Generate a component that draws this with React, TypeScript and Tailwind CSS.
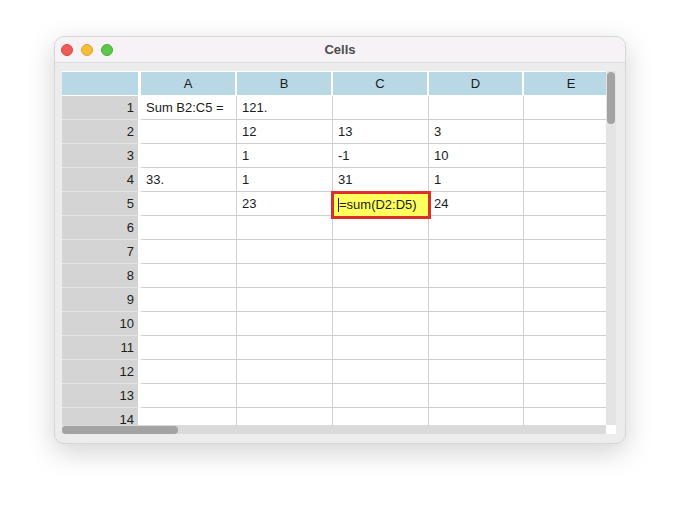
import * as React from 'react';

const columns = ['A', 'B', 'C', 'D', 'E'];
const colWidths = ['w-[96px]', 'w-[96px]', 'w-[96px]', 'w-[95px]', 'w-[96px]'];

// cell contents keyed by row, then column index
const data: Record<number, Record<number, string>> = {
    1: { 0: 'Sum B2:C5 =', 1: '121.' },
    2: { 1: '12', 2: '13', 3: '3' },
    3: { 1: '1', 2: '-1', 3: '10' },
    4: { 0: '33.', 1: '1', 2: '31', 3: '1' },
    5: { 1: '23', 3: '24' },
};

const rows = Array.from({ length: 14 }, (_, i) => i + 1);

const App: React.FunctionComponent = () => {
    return (
        <div className="w-[680px] h-[516px] bg-white flex items-start justify-start" style={{ fontFamily: '"Liberation Sans", Arial, sans-serif' }}>
            <div className="ml-[54px] mt-[36px] w-[572px] h-[408px] rounded-[10px] bg-[#ececec] border border-[#d6d6d6] shadow-[0_8px_28px_rgba(0,0,0,0.18)] overflow-hidden flex flex-col">
                {/* title bar */}
                <div className="h-[26px] shrink-0 bg-[#f6f2f6] border-b border-[#dcdcdc] flex items-center relative">
                    <div className="flex gap-[8px] pl-[6px]">
                        <span className="w-[12px] h-[12px] rounded-full bg-[#ee5d55] border border-[#d9483f]"></span>
                        <span className="w-[12px] h-[12px] rounded-full bg-[#f6bd3b] border border-[#dca32c]"></span>
                        <span className="w-[12px] h-[12px] rounded-full bg-[#5ec64a] border border-[#48ac37]"></span>
                    </div>
                    <div className="absolute inset-0 flex items-center justify-center text-[13px] font-bold text-[#4b4b4b]">Cells</div>
                </div>

                <div className="flex-1 pl-[7px] pt-[8px]">
                    <div className="flex">
                        {/* sheet */}
                        <div className="w-[544px] h-[354px] bg-white overflow-hidden">
                            <div className="flex h-[25px] pt-px border-b border-white w-max">
                                <div className="w-[79px] h-full bg-[#b8d8e5] border-r-[3px] border-white"></div>
                                {columns.map((c, ci) => (
                                    <div key={c} className={`${colWidths[ci]} h-full bg-[#b8d8e5] border-r-2 border-white flex items-center justify-center text-[13px] text-[#1c1c1c]`}>
                                        {c}
                                    </div>
                                ))}
                            </div>
                            {rows.map((r) => (
                                <div key={r} className="flex h-[24px] w-max">
                                    <div className="w-[79px] h-full bg-[#d4d4d4] border-b border-[#e6e6e6] border-r-[3px] border-r-white flex items-center justify-end pr-[4px] text-[13px] text-[#1c1c1c]">
                                        {r}
                                    </div>
                                    {columns.map((c, ci) =>
                                        r === 5 && ci === 2 ? (
                                            <div key={c} className={`${colWidths[ci]} h-full relative border-r border-b border-[#d0d0d0]`}>
                                                <div className="absolute -left-[2px] -top-[1px] w-[100px] h-[28px] bg-[#ffff5e] border-[3px] border-[#dc2e2a] flex items-center pl-[4px] text-[13px] text-[#1c1c1c] z-10">
                                                    <span className="w-px h-[14px] bg-[#1c1c1c]"></span>=sum(D2:D5)
                                                </div>
                                            </div>
                                        ) : (
                                            <div key={c} className={`${colWidths[ci]} h-full border-r border-b border-[#d0d0d0] flex items-center pl-[5px] text-[13px] text-[#1c1c1c]`}>
                                                {data[r]?.[ci] ?? ''}
                                            </div>
                                        )
                                    )}
                                </div>
                            ))}
                        </div>
                        {/* vertical scrollbar */}
                        <div className="w-[10px] h-[354px] bg-[#e4e4e4] flex justify-center pt-[1px]">
                            <div className="w-[8px] h-[52px] rounded-[4px] bg-[#a3a3a3]"></div>
                        </div>
                    </div>
                    {/* horizontal scrollbar */}
                    <div className="flex">
                        <div className="w-[544px] h-[9px] bg-[#dadada] flex items-center">
                            <div className="w-[116px] h-[8px] rounded-[4px] bg-[#a3a3a3]"></div>
                        </div>
                        <div className="w-[10px] h-[9px] bg-white"></div>
                    </div>
                </div>
            </div>
        </div>
    );
};

export default App;
